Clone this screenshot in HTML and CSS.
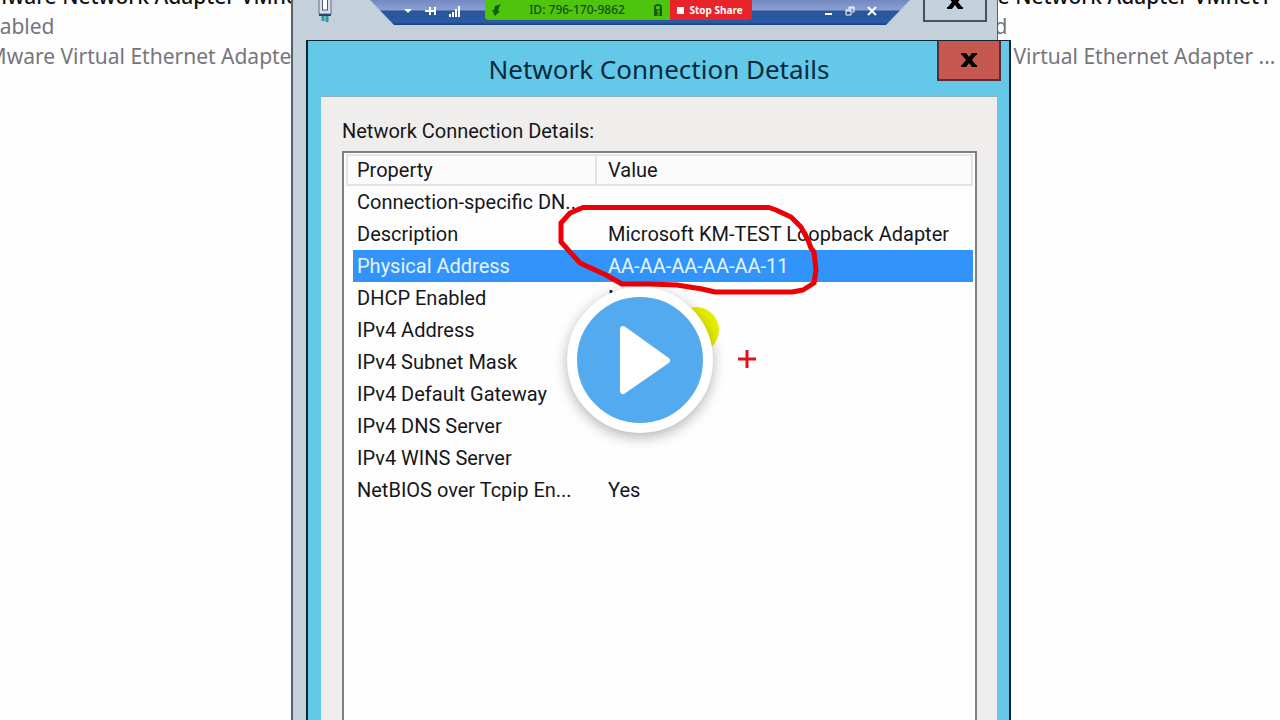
FILE: index.html
```html
<!DOCTYPE html>
<html lang="en">
<head>
    <meta charset="utf-8">
    <title>Network Connection Details</title>
    <link rel="stylesheet" href="styles.css">
</head>
<body>
    <div class="desktop">
        <div class="adapters">
            <div class="adapter">
                <div class="adapter-name">VMware Network Adapter VMnet1</div>
                <div>Enabled</div>
                <div>VMware Virtual Ethernet Adapter ...</div>
            </div>
            <div class="adapter">
                <div class="adapter-name">VMware Network Adapter VMnet1</div>
                <div>Enabled</div>
                <div>VMware Virtual Ethernet Adapter ...</div>
            </div>
        </div>

        <!-- window behind the dialog -->
        <div class="back-window">
            <svg class="adapter-icon" width="16" height="24" viewBox="0 0 16 24">
                <path d="M2 0V14H14V0" fill="#d9e0e8" stroke="#5d6a80" stroke-width="1"/>
                <rect x="5.5" y="-2" width="5" height="12" fill="#fff" stroke="#4d5b7a"/>
                <path d="M2 15H14" stroke="#29436e" stroke-width="2"/>
                <path d="M6 16V21M10 16V22" stroke="#2b9aa5" stroke-width="3"/>
            </svg>
            <button class="back-close" aria-label="Close window">
                <svg width="18" height="16" viewBox="0 0 18 16"><path d="M1 1H6L9 5L12 1H17V3H16L12 8L16 13H17V15H12L9 11L6 15H1V13H2L6 8L2 3H1Z" fill="#000"/></svg>
            </button>
        </div>

        <!-- remote session bar -->
        <div class="session-bar">
            <div class="bar-icons">
                <button aria-label="Menu"><svg width="10" height="10" viewBox="0 0 10 10"><path d="M1 3H9L5 7Z" fill="#fff"/></svg></button>
                <button aria-label="Pin"><svg width="12" height="10" viewBox="0 0 12 10"><path d="M0 5H5M5 1V9M5 5H10M10 1V9" stroke="#fff" stroke-width="2" fill="none"/></svg></button>
                <button aria-label="Connection"><svg width="12" height="12" viewBox="0 0 12 12"><path d="M1 9V12M4 7V12M7 4V12M10 1V12" stroke="#fff" stroke-width="2"/></svg></button>
            </div>
            <div class="share">
                <div class="share-id">
                    <svg width="10" height="13" viewBox="0 0 10 13"><path d="M9 0L3 2L2 6H0L3 12L8 7H6L7 3Z" fill="#145c12"/></svg>
                    <span>ID: 796-170-9862</span>
                    <svg width="10" height="12" viewBox="0 0 10 12"><path d="M2 5V3Q2 1 5 1Q8 1 8 3V5" fill="none" stroke="#145c12" stroke-width="2"/><rect x="1" y="5" width="8" height="7" fill="#145c12"/><path d="M4 6H6V11H4M4 8H6" fill="none" stroke="#4fc40d"/></svg>
                </div>
                <button class="stop"><i></i>Stop Share</button>
            </div>
            <div class="bar-icons">
                <button aria-label="Minimize"><svg width="10" height="10" viewBox="0 0 10 10"><path d="M2 8H9" stroke="#fff" stroke-width="2"/></svg></button>
                <button aria-label="Restore"><svg width="10" height="10" viewBox="0 0 10 10"><path d="M1 4H6V9H1ZM1 5H6M4 3V1H9V6H7M4 2H9" stroke="#fff" fill="none"/></svg></button>
                <button aria-label="Disconnect"><svg width="10" height="10" viewBox="0 0 10 10"><path d="M1 1L9 9M9 1L1 9" stroke="#fff" stroke-width="2"/></svg></button>
            </div>
        </div>

        <div class="dialog">
            <div class="titlebar">
                <h1>Network Connection Details</h1>
                <button class="close" aria-label="Close">
                    <svg width="18" height="16" viewBox="0 0 18 16"><path d="M1 1H6L9 5L12 1H17V3H16L12 8L16 13H17V15H12L9 11L6 15H1V13H2L6 8L2 3H1Z" fill="#000"/></svg>
                </button>
            </div>
            <div class="dialog-body">
                <div class="caption" id="caption">Network Connection Details:</div>
                <div class="list">
                    <table aria-labelledby="caption">
                        <thead>
                            <tr><th>Property</th><th>Value</th></tr>
                        </thead>
                        <tbody>
                            <tr><td>Connection-specific DN...</td><td></td></tr>
                            <tr><td>Description</td><td>Microsoft KM-TEST Loopback Adapter</td></tr>
                            <tr class="selected"><td>Physical Address</td><td>AA-AA-AA-AA-AA-11</td></tr>
                            <tr><td>DHCP Enabled</td><td>No</td></tr>
                            <tr><td>IPv4 Address</td><td></td></tr>
                            <tr><td>IPv4 Subnet Mask</td><td></td></tr>
                            <tr><td>IPv4 Default Gateway</td><td></td></tr>
                            <tr><td>IPv4 DNS Server</td><td></td></tr>
                            <tr><td>IPv4 WINS Server</td><td></td></tr>
                            <tr><td>NetBIOS over Tcpip En...</td><td>Yes</td></tr>
                        </tbody>
                    </table>
                </div>
            </div>
        </div>

        <!-- pen marks: lasso, highlighter dot, cross cursor -->
        <svg class="marks" width="280" height="180" viewBox="550 195 280 180">
            <circle cx="696" cy="330" r="23" fill="#e6ee00"/>
            <path d="M583 207.500H769L776 210L791 217L801 227L808 240L811 248L814 252L816 270L814 283L803 290L792 292H715L702 289L677 285L650 284H622L606 275L580 263L561 242V223L570 213Z" fill="none" stroke="#ec0006" stroke-width="5" stroke-linejoin="round"/>
            <path d="M738 359H756M747 350V368" stroke="#e01020" stroke-width="3"/>
        </svg>

        <button class="play" aria-label="Play">
            <svg width="52" height="70" viewBox="0 0 52 70"><path d="M4 4L48 35.500L4 66Z" fill="#fff" stroke="#fff" stroke-width="6" stroke-linejoin="round"/></svg>
        </button>
    </div>
</body>
</html>
```

FILE: styles.css
```css
* { box-sizing: border-box; }
body { margin: 0; background: #fefefe; }
button { 
    padding: 0; 
    border: none; 
    background: none; 
    cursor: pointer; 
}
svg { display: block; }
.desktop {
    position: relative;
    height: 100vh;
    overflow: hidden;
    font-family: Roboto, "Liberation Sans", sans-serif;
}

/* adapter tiles */
.adapters {
    display: flex;
    gap: 573px;
    margin-left: -25px;
    margin-top: -19px;
}
.adapter {
    flex: 0 0 380px;
    font: 21px/30px "Noto Sans", sans-serif;
    color: #77757a;
    white-space: nowrap;
}
.adapter-name { font-weight: 500; color: #111; }

.back-window {
    position: absolute;
    top: 0;
    bottom: 0;
    left: 291px;
    width: 707px;
    display: flex;
    justify-content: space-between;
    align-items: flex-start;
    padding: 0 10px 0 24px;
    background: #c5d1da;
    border: 2px solid #5b6068;
    border-width: 0 1px 0 2px;
}
.back-close {
    display: flex;
    justify-content: center;
    width: 64px;
    height: 22px;
    border: 2px solid #4b5158;
    border-top: none;
}
.back-close svg { margin-top: -6px; }

/* session bar */
.session-bar {
    position: absolute;
    top: 0;
    left: 50%;
    width: 540px;
    height: 25px;
    transform: translateX(-50%);
    display: flex;
    justify-content: space-between;
    padding: 0 33px;
    background: linear-gradient(#7388c0, #8a9fd2 10px, #2a5599 11px, #2a5ba4 22px, #183f80);
    clip-path: polygon(0 0, 100% 0, 516px 100%, 24px 100%);
}
.bar-icons { 
    display: flex; 
    gap: 12px; 
    align-items: center; 
    height: 22px; 
}
.share {
    display: flex;
    width: 267px;
    height: 20px;
    margin-right: 48px;
    border-radius: 0 0 4px 4px;
    overflow: hidden;
}
.share-id {
    flex: 1;
    display: flex;
    align-items: center;
    justify-content: space-between;
    padding: 0 7px;
    background: #4fc40d;
    color: #14500f;
    font: 500 12px/20px "Noto Sans", sans-serif;
}
.stop {
    display: flex;
    align-items: center;
    gap: 6px;
    width: 82px;
    padding-left: 7px;
    background: #e8232a;
    color: #fff;
    font: bold 10px/20px "Noto Sans", sans-serif;
    white-space: nowrap;
}
.stop i { width: 7px; height: 7px; background: #fff; }

/* dialog */
.dialog {
    position: absolute;
    top: 40px;
    bottom: 0;
    left: 306px;
    width: 705px;
    display: flex;
    flex-direction: column;
    padding: 0 12px 0 13px;
    background: #64c8e8;
    border: 2px solid #0c2530;
    border-width: 1px 2px 0 2px;
}
.titlebar {
    position: relative;
    height: 55px;
}
.titlebar h1 {
    margin: 0;
    font: 26px/56px "Noto Sans", sans-serif;
    color: #082a3c;
    text-align: center;
}
.close {
    position: absolute;
    top: 0;
    right: -4px;
    display: flex;
    align-items: center;
    justify-content: center;
    width: 64px;
    height: 40px;
    background: #c75850;
    border: 2px solid #5a2c34;
    border-top: none;
}
.dialog-body {
    flex: 1;
    display: flex;
    flex-direction: column;
    padding: 18px 20px 0 21px;
    background: #efeeec;
    border-top: 1px solid #8eb0bd;
}
.caption { 
    font-size: 20px; 
    line-height: 32px; 
    color: #16161c; 
    margin-bottom: 4px;
}
.list {
    flex: 1;
    padding: 1px 2px;
    background: #fefefe;
    border: 2px solid #808084;
    border-bottom: none;
}
table {
    width: 100%;
    table-layout: fixed;
    border-spacing: 0;
    font-size: 20px;
    color: #16161c;
}
th, td {
    height: 32px;
    padding: 0 0 0 11px;
    text-align: left;
    font-weight: normal;
    white-space: nowrap;
}
th { border: 2px solid #e4e4e4; border-left: none; background: #fbfbfb; }
th:first-child { width: 251px; border-left: 2px solid #e4e4e4; padding-left: 9px; }
td:first-child { padding-left: 4px; border-left: 7px solid #fefefe; }
.selected td { background: #3294fb; color: #e4f4ff; }

.marks {
    position: absolute;
    top: 195px;
    left: 550px;
}
.play {
    position: absolute;
    top: 50%;
    left: 50%;
    transform: translate(-50%, -50%);
    display: flex;
    align-items: center;
    justify-content: center;
    width: 146px;
    height: 146px;
    padding-left: 10px;
    border: 10px solid #fff;
    border-radius: 50%;
    background: #54aaee;
    box-shadow: 0 4px 14px rgba(0, 0, 0, 0.3);
}
```
